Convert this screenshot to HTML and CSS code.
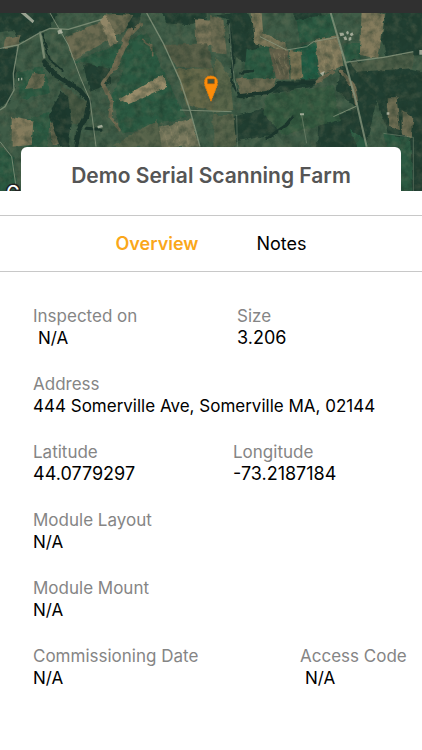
FILE: index.html
```html
<!DOCTYPE html>
<html lang="en">
<head>
<meta charset="utf-8">
<meta name="viewport" content="width=device-width, initial-scale=1">
<title>Demo Serial Scanning Farm</title>
<link rel="stylesheet" href="styles.css">
</head>
<body>
<div class="status-bar"></div>
<header class="hero">
  <svg class="map" viewBox="0 39 1266 534" preserveAspectRatio="xMidYMid slice" aria-hidden="true">
    <defs>
      <filter id="rough" x="0" y="0" width="100%" height="100%" color-interpolation-filters="sRGB">
        <feTurbulence type="fractalNoise" baseFrequency="0.04" numOctaves="3" seed="4" result="n"/>
        <feDisplacementMap in="SourceGraphic" in2="n" scale="13" xChannelSelector="R" yChannelSelector="G" result="d"/>
        <feGaussianBlur in="d" stdDeviation="1.2"/>
      </filter>
      <filter id="grain" x="0" y="0" width="100%" height="100%" color-interpolation-filters="sRGB">
        <feTurbulence type="fractalNoise" baseFrequency="0.04" numOctaves="4" seed="9"/>
        <feColorMatrix values="0 0 0 0 0.1  0 0 0 0 0.2  0 0 0 0 0.15  2 0 0 0 -0.75"/>
      </filter>
      <filter id="light" x="0" y="0" width="100%" height="100%" color-interpolation-filters="sRGB">
        <feTurbulence type="fractalNoise" baseFrequency="0.04" numOctaves="4" seed="21"/>
        <feColorMatrix values="0 0 0 0 0.5  0 0 0 0 0.49  0 0 0 0 0.38  0 1.6 0 0 -0.7"/>
      </filter>
    </defs>
    <rect y="39" width="1266" height="534" fill="#3f5c47"/>
    <g filter="url(#rough)">
      <path d="M-20 20H1290V600H-20Z" fill="#3f5c47"/>
      <g fill="#213f32">
        <path d="M-20 20H180L150 85 60 130 40 90-20 100Z"/>
        <path d="M-20 145 50 135 45 260 25 310-20 330Z"/>
        <path d="M330 20H430L410 90 340 70ZM480 20H620V60L560 75 500 70Z"/>
        <path d="M250 195 330 170 330 250 270 275Z"/>
        <path d="M640 45 740 30 780 120 765 200 700 170 690 60Z"/>
        <path d="M835 245 950 235 940 260 720 295 710 280 815 270Z"/>
        <path d="M900 70 870 30 960 30 970 60 925 75Z"/>
        <path d="M1160 20H1290V165L1160 170 1145 120Z"/>
        <path d="M1020 205 1060 180 1230 205 1290 220V600H1205L1160 390 1130 300 1090 470H950L955 370 1070 325 1010 270Z"/>
        <path d="M700 350 790 325 840 400 700 425Z"/>
      </g>
      <g fill="#2b5a42">
        <path d="M220 185 440 100 540 320 560 350 370 400 330 300 370 210Z"/>
        <path d="M50 220 130 200 150 280 60 300ZM80 360 160 330 140 440H70ZM-10 430 40 470 50 573H-10Z"/>
        <path d="M880 150 950 125 955 235 908 240Z" fill="#1f5b43"/>
        <path d="M800 285 1000 255 1020 360 850 405 790 340Z" fill="#345a40"/>
        <path d="M890 60 1000 40 1010 110 900 130ZM1030 130 1080 130 1080 175 1040 185Z"/>
        <path d="M1150 400 1230 415 1240 573H1190ZM1050 390 1100 420 1100 470H1080Z"/>
        <path d="M740 150 810 135 825 235 730 240Z"/>
      </g>
      <g fill="#6c6b51">
        <path d="M195 110 300 65 320 40 400 45 370 95 220 180Z"/>
        <path d="M585 55 640 60V140H590Z" fill="#7b7559"/>
        <path d="M630 45 670 60 680 160 635 155Z"/>
        <path d="M755 40 785 40 790 100 860 130 860 155 765 130Z" fill="#827b5c"/>
        <path d="M805 145 865 150 868 238 830 240Z" fill="#635f49"/>
        <path d="M870 150 903 155 907 238 872 238Z" fill="#7b7454"/>
        <path d="M710 235 830 235 815 270 720 285Z"/>
        <path d="M470 385 575 355 600 440 480 440Z" fill="#7b7a5e"/>
        <path d="M150 370 185 375 180 435 155 435Z"/>
        <path d="M15 115 65 105 55 140 10 145ZM100 215 135 225 125 265 75 270Z"/>
        <path d="M1160 295 1190 295 1200 390 1165 380ZM1205 330 1240 350 1235 420 1205 400Z"/>
      </g>
      <g fill="#857c5d">
        <path d="M35 350 100 365 95 435 35 440Z"/>
        <path d="M945 120 1015 108 1030 195 960 225Z"/>
        <path d="M1085 30 1155 40 1135 175 1080 165Z"/>
      </g>
      <path d="M490 135 620 130 640 205 530 200Z" fill="#565d46"/>
      <path d="M527 207 640 205 650 335 560 315Z" fill="#656849"/>
      <path d="M645 170 690 230 700 330 640 340Z" fill="#596549"/>
      <path d="M400 400 472 360 485 440H340ZM640 345 700 345 710 440H640Z" fill="#56634a"/>
      <path d="M1050 190 1240 155 1240 205 1070 215Z" fill="#4b5d47"/>
      <path d="M175 245 265 310 240 375 215 370 205 300Z" fill="#445641"/>
      <path d="M145 345 185 270 205 300 215 370 205 440H180Z" fill="#1c392e"/>
      <path d="M358 297 485 225 503 260 385 313Z" fill="#988c6a"/>
      <path d="M300 60 318 45 355 125 330 140Z" fill="#918667"/>
      <g fill="none" stroke="#716b51" stroke-linecap="round" stroke-linejoin="round">
        <path d="M425 70 380 115 350 190 310 250 335 305 330 350 360 390" stroke-width="10"/>
        <path d="M425 118 455 135 455 170" stroke-width="5"/>
        <path d="M390 90 345 200" stroke-width="18"/>
        <path d="M1025 215 1060 260 1070 310M950 245 1000 215" stroke-width="12"/>
      </g>
      <g stroke="#a09672" stroke-width="3" opacity=".35">
        <path d="M490 390 505 440M510 380 525 440M530 372 545 440M550 368 568 440M960 130 975 210M975 125 990 205M990 120 1008 200M820 160 840 225M835 160 853 225M850 160 868 225"/>
      </g>
    </g>
    <rect y="39" width="1266" height="534" filter="url(#grain)" opacity=".5"/>
    <rect y="39" width="1266" height="534" filter="url(#light)" opacity=".38"/>
    <g filter="url(#rough)" fill="none" stroke="#1b362c" stroke-linecap="round" stroke-linejoin="round">
      <path d="M130 185 165 225 235 265 268 305 258 350 237 390 228 440" stroke-width="13"/>
      <path d="M125 100 150 180 185 210" stroke-width="6"/>
      <path d="M685 60 700 170 695 245 720 290" stroke-width="8"/>
      <path d="M260 385 300 388M800 415 860 375 880 350M725 220 755 215" stroke-width="9"/>
      <path d="M715 288 800 280 840 252 945 248" stroke-width="11"/>
    </g>
    <g fill="none" stroke="#8b9980" stroke-width="4" stroke-linejoin="round" opacity=".75">
      <path d="M0 145 55 135 120 98 150 85 205 88 305 58"/>
      <path d="M55 135 40 220 42 270 15 320 0 330"/>
      <path d="M150 39 205 135 240 230 270 300 288 440" stroke-width="3"/>
      <path d="M440 39 490 130 540 240 570 330 600 440"/>
      <path d="M992 39 1035 185 1070 310 1100 440" stroke-width="6"/>
      <path d="M1035 187 1150 172 1240 155"/>
      <path d="M780 110 860 150 920 140 940 125 1010 112" stroke-width="3"/>
      <path d="M540 330 695 335M1000 350 1070 318M0 425 35 470 50 573" stroke-width="3"/>
      <path d="M688 70 694 160 703 240 712 275M1150 400 1240 412 1240 573M710 345 712 440M905 345 920 430" stroke-width="3" opacity=".6"/>
      <path d="M120 95 133 175" stroke-width="7"/>
    </g>
    <g fill="#c1c4b2" opacity=".75">
      <path d="M60 37 75 37 103 62 98 70ZM172 92l12-5 5 12-14 4ZM1018 98l12 0 3 8-12 3ZM1038 96l6-4 3 8-6 4ZM1049 102l8-5 4 8-8 4ZM1030 112l8-3 4 10-8 2ZM1046 113l8-3 0 10-8 3ZM900 340h12v6h-12ZM960 220l14-7-5 16ZM1160 337h8v7h-8ZM292 378l14-4 3 8-15 3ZM54 234h4v8h-4ZM63 233h4v8h-4ZM1258 150h8v14h-8Z"/>
    </g>
    <path d="M633 304 614 255Q610 228 633 228Q656 228 652 255Z" fill="#fb8c0a" stroke="#e57d08" stroke-width="3" stroke-dasharray="5 3"/>
    <path d="M623 237H643V251H623Z" fill="#44543e" stroke="#a65b12" stroke-width="2"/>
    <text class="map-mark" x="19" y="598">G</text>
  </svg>
  <h1 class="title">Demo Serial Scanning Farm</h1>
</header>
<nav class="tabs">
  <button class="tab tab-active" type="button">Overview</button>
  <button class="tab" type="button">Notes</button>
</nav>
<main>
  <dl class="details">
    <div class="row row-size">
      <div><dt>Inspected on</dt><dd class="indent">N/A</dd></div>
      <div><dt>Size</dt><dd class="number">3.206</dd></div>
    </div>
    <div class="row">
      <div><dt>Address</dt><dd>444 Somerville Ave, Somerville MA, 02144</dd></div>
    </div>
    <div class="row row-coords">
      <div><dt>Latitude</dt><dd class="number">44.0779297</dd></div>
      <div><dt>Longitude</dt><dd class="number">-73.2187184</dd></div>
    </div>
    <div class="row">
      <div><dt>Module Layout</dt><dd>N/A</dd></div>
    </div>
    <div class="row">
      <div><dt>Module Mount</dt><dd>N/A</dd></div>
    </div>
    <div class="row row-access">
      <div><dt>Commissioning Date</dt><dd>N/A</dd></div>
      <div><dt>Access Code</dt><dd class="indent">N/A</dd></div>
    </div>
  </dl>
</main>
</body>
</html>
```
FILE: styles.css
```css
* {
  box-sizing: border-box;
}

body {
  margin: 0;
  background: #fff;
  color: #000;
  font-family: Inter, "Liberation Sans", sans-serif;
  font-size: 17px;
  line-height: 22px;
}

.status-bar {
  height: 13px;
  background: #303030;
}

.hero {
  display: grid;
  padding-bottom: 24px;
}

.map {
  grid-area: 1 / 1;
  display: block;
  width: 100%;
  height: 178px;
}

.map-mark {
  font-size: 54px;
  font-weight: 500;
  fill: #fff;
  stroke: #222;
  stroke-width: 9px;
  paint-order: stroke;
}

.title {
  grid-area: 1 / 1;
  align-self: end;
  z-index: 1;
  margin: 0 21px;
  padding: 16px 8px 2px;
  border-radius: 6px 6px 0 0;
  background: #fff;
  color: #555;
  font-size: 21px;
  font-weight: 600;
  line-height: 26px;
  text-align: center;
}

.tabs {
  display: flex;
  justify-content: center;
  gap: 58px;
  border-top: 1px solid #c8c8c8;
  border-bottom: 1px solid #c8c8c8;
}

.tab {
  padding: 17px 0 16px;
  border: 0;
  background: none;
  color: #000;
  font: inherit;
  font-size: 18px;
}

.tab-active {
  color: #faa71a;
  font-weight: 600;
}

.details {
  display: grid;
  gap: 24px;
  margin: 0;
  padding: 33px 14px 34px 33px;
}

.row {
  display: grid;
}

.row-size {
  grid-template-columns: 204fr 171fr;
}

.row-coords {
  grid-template-columns: 200fr 175fr;
}

.row-access {
  grid-template-columns: 267fr 108fr;
}

dt {
  color: #858585;
  white-space: nowrap;
}

dd {
  margin: 0;
}

.number {
  font-size: 18px;
}

.indent {
  padding-left: 5px;
}
```
